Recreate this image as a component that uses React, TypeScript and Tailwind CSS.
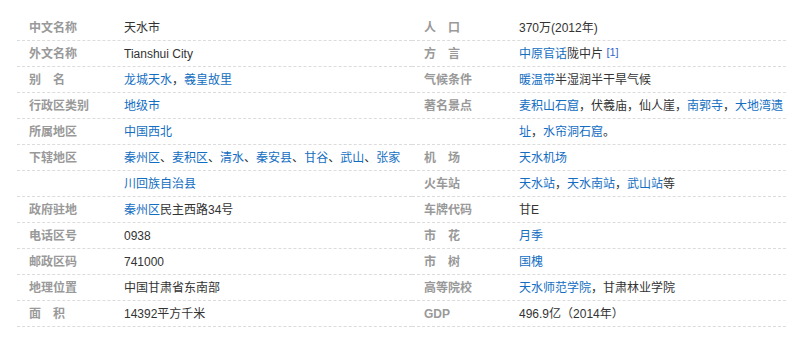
import type { ReactNode } from "react";

type Row = { label?: string; value: ReactNode };

const A = ({ children }: { children: ReactNode }) => (
  <a href="#" className="text-[#136ec2] no-underline">
    {children}
  </a>
);

const leftRows: Row[] = [
  { label: "中文名称", value: "天水市" },
  { label: "外文名称", value: "Tianshui City" },
  {
    label: "别　名",
    value: (
      <>
        <A>龙城天水</A>，<A>羲皇故里</A>
      </>
    ),
  },
  { label: "行政区类别", value: <A>地级市</A> },
  { label: "所属地区", value: <A>中国西北</A> },
  {
    label: "下辖地区",
    value: (
      <>
        <A>秦州区</A>、<A>麦积区</A>、<A>清水</A>、<A>秦安县</A>、<A>甘谷</A>、
        <A>武山</A>、<A>张家</A>
      </>
    ),
  },
  { value: <A>川回族自治县</A> },
  {
    label: "政府驻地",
    value: (
      <>
        <A>秦州区</A>民主西路34号
      </>
    ),
  },
  { label: "电话区号", value: "0938" },
  { label: "邮政区码", value: "741000" },
  { label: "地理位置", value: "中国甘肃省东南部" },
  { label: "面　积", value: "14392平方千米" },
];

const rightRows: Row[] = [
  { label: "人　口", value: "370万(2012年)" },
  {
    label: "方　言",
    value: (
      <>
        <A>中原官话</A>陇中片{" "}
        <sup className="text-[11px] text-[#3366cc] relative -top-[2px]">[1]</sup>
      </>
    ),
  },
  {
    label: "气候条件",
    value: (
      <>
        <A>暖温带</A>半湿润半干旱气候
      </>
    ),
  },
  {
    label: "著名景点",
    value: (
      <>
        <A>麦积山石窟</A>，伏羲庙，仙人崖，<A>南郭寺</A>，<A>大地湾遗</A>
      </>
    ),
  },
  {
    value: (
      <>
        <A>址</A>，<A>水帘洞石窟</A>。
      </>
    ),
  },
  { label: "机　场", value: <A>天水机场</A> },
  {
    label: "火车站",
    value: (
      <>
        <A>天水站</A>，<A>天水南站</A>，<A>武山站</A>等
      </>
    ),
  },
  { label: "车牌代码", value: "甘E" },
  { label: "市　花", value: <A>月季</A> },
  { label: "市　树", value: <A>国槐</A> },
  {
    label: "高等院校",
    value: (
      <>
        <A>天水师范学院</A>，甘肃林业学院
      </>
    ),
  },
  { label: "GDP", value: "496.9亿（2014年）" },
];

function Column({ rows, width }: { rows: Row[]; width: string }) {
  return (
    <dl className={width}>
      {rows.map((r, i) => (
        <div
          key={i}
          className="flex h-[26px] items-center border-b border-dashed border-[#dcdcdc] pl-[12px]"
        >
          <dt className="w-[95px] shrink-0 font-bold text-[#999]">{r.label ?? ""}</dt>
          <dd className="whitespace-nowrap text-[#333]">{r.value}</dd>
        </div>
      ))}
    </dl>
  );
}

export default function App() {
  return (
    <div className="h-[351px] w-[789px] bg-white pl-[17px] pt-[15px] font-['Liberation_Sans','Noto_Sans_CJK_SC',sans-serif] text-[12px] leading-[26px]">
      <div className="flex">
        <Column rows={leftRows} width="w-[395px]" />
        <Column rows={rightRows} width="w-[374px]" />
      </div>
    </div>
  );
}
